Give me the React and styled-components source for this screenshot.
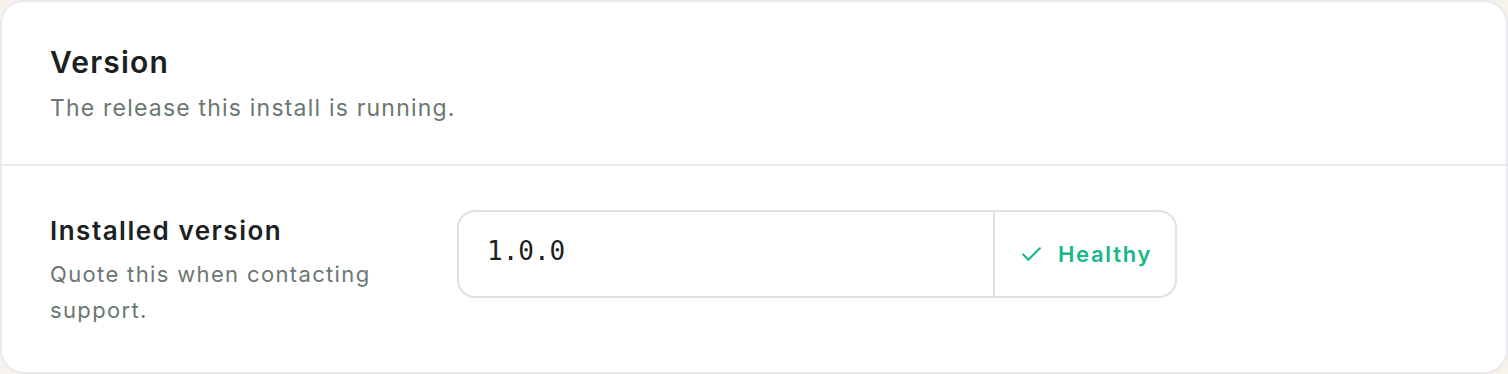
import styled, { createGlobalStyle } from "styled-components";

const Global = createGlobalStyle`
  html, body {
    margin: 0;
    padding: 0;
    background: #f6f3ec;
  }
  body {
    font-family: Inter, "Noto Sans", sans-serif;
  }
`

const Card = styled.section`
  box-sizing: border-box;
  width: 1508px;
  height: 374px;
  background: #fff;
  border: 2px solid #e9e9ee;
  border-radius: 24px;
  overflow: hidden;
`

const Header = styled.header`
  padding: 42px 48px 0;
  height: 164px;
  box-sizing: border-box;
  border-bottom: 2px solid #ebebef;
`

const Title = styled.h2`
  margin: 0;
  font-size: 30px;
  font-weight: 600;
  letter-spacing: 1.2px;
  color: #1b211f;
  line-height: 36px;
`

const Subtitle = styled.p`
  margin: 12px 0 0;
  font-size: 23px;
  letter-spacing: 1.2px;
  color: #6a7772;
  line-height: 32px;
`

const Row = styled.div`
  display: grid;
  grid-template-columns: 360px 720px;
  column-gap: 47px;
  padding: 47px 48px 0;
`

const Label = styled.h3`
  margin: 0;
  font-size: 26px;
  font-weight: 600;
  letter-spacing: 1.5px;
  color: #1b211f;
  line-height: 36px;
`

const Desc = styled.p`
  margin: 7px 0 0;
  font-size: 22px;
  letter-spacing: 1.35px;
  color: #6a7772;
  line-height: 36px;
`

const Field = styled.div`
  display: flex;
  height: 88px;
  margin-top: -3px;
  box-sizing: border-box;
  border: 2px solid #dfe2e1;
  border-radius: 18px;
  overflow: hidden;
`

const Value = styled.div`
  flex: 1;
  display: flex;
  align-items: center;
  padding: 0 28px 6px;
  font-family: "DejaVu Sans Mono", "Liberation Mono", monospace;
  font-size: 26px;
  color: #1b211f;
  border-right: 2px solid #dfe2e1;
`

const Status = styled.div`
  width: 180px;
  display: flex;
  align-items: center;
  gap: 14px;
  padding-left: 24px;
  box-sizing: border-box;
  color: #17b78a;
  font-size: 22px;
  font-weight: 600;
  letter-spacing: 1.7px;
`

const Check = () => (
  <svg width="25" height="25" viewBox="0 0 24 24" fill="none" stroke="currentColor" strokeWidth="2" strokeLinecap="round" strokeLinejoin="round">
    <path d="M20 6 9 17l-5-5" />
  </svg>
)

const App = () => {
  return (
    <>
      <Global />
      <Card>
        <Header>
          <Title>Version</Title>
          <Subtitle>The release this install is running.</Subtitle>
        </Header>
        <Row>
          <div>
            <Label>Installed version</Label>
            <Desc>Quote this when contacting support.</Desc>
          </div>
          <Field>
            <Value>1.0.0</Value>
            <Status>
              <Check />
              Healthy
            </Status>
          </Field>
        </Row>
      </Card>
    </>
  )
}

export default App
